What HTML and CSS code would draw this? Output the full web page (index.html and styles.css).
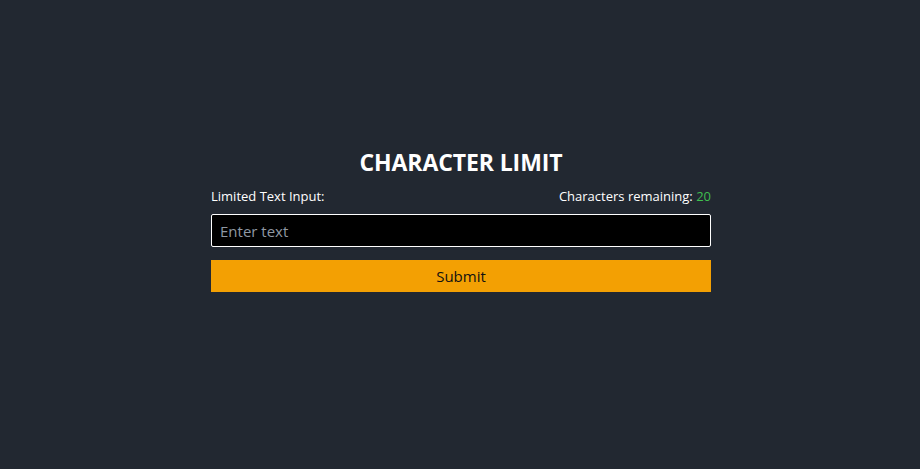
FILE: index.html
```html
<!DOCTYPE html>
<html>
<head>
<meta charset="utf-8">
<link rel="stylesheet" href="styles.css">
</head>
<body>
<main class="app">
  <div class="card">
    <h1 class="title">CHARACTER LIMIT</h1>
    <div class="label-row">
      <label class="label" for="txt">Limited Text Input:</label>
      <span class="counter">Characters remaining: <span class="count">20</span></span>
    </div>
    <input id="txt" class="field" type="text" placeholder="Enter text" maxlength="20">
    <button class="submit" type="button">Submit</button>
  </div>
</main>
</body>
</html>
```
FILE: styles.css
```css
html, body {
  margin: 0;
  padding: 0;
  background: #222831;
  height: 100%;
}
body {
  font-family: "Open Sans", "Noto Sans", sans-serif;
  color: #ffffff;
}
.app {
  display: flex;
  justify-content: center;
  padding-top: 146px;
  padding-left: 2px;
}
.card {
  width: 500px;
  display: flex;
  flex-direction: column;
}
.title {
  margin: 0;
  text-align: center;
  font-size: 23px;
  font-weight: 700;
  line-height: 32px;
  letter-spacing: -0.1px;
}
.label-row {
  display: flex;
  justify-content: space-between;
  align-items: center;
  font-size: 13px;
  line-height: 20px;
  margin-top: 8px;
}
.count {
  color: #3fbf4f;
}
.field {
  margin-top: 8px;
  height: 33px;
  box-sizing: border-box;
  background: #000;
  border: 1px solid #fff;
  border-radius: 2px;
  color: #fff;
  font-family: inherit;
  font-size: 15px;
  padding: 0 8px;
  outline: none;
}
.field::placeholder {
  color: #8f98a3;
}
.submit {
  margin-top: 13px;
  height: 32px;
  border: none;
  border-radius: 0;
  background: #f3a003;
  color: #111;
  font-family: inherit;
  font-size: 15px;
  cursor: pointer;
}
```
